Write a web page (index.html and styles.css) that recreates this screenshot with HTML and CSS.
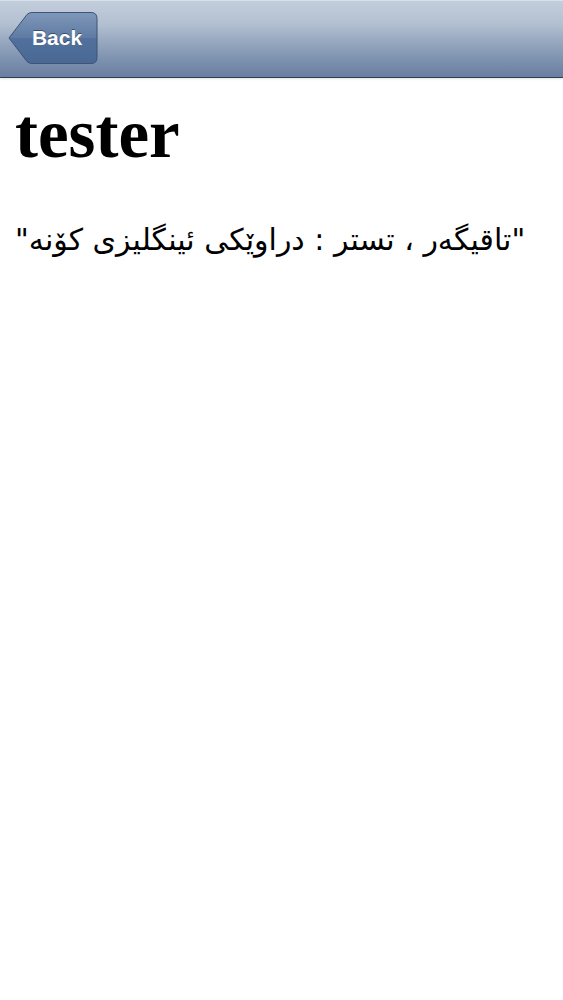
FILE: index.html
```html
<!DOCTYPE html>
<html>
<head>
<meta charset="utf-8">
<link rel="stylesheet" href="styles.css">
</head>
<body>
<header class="navbar">
  <a class="back" href="#">
    <svg class="back-shape" viewBox="0 0 90 52" preserveAspectRatio="none">
      <defs>
        <linearGradient id="bg" x1="0" y1="0" x2="0" y2="1">
          <stop offset="0" stop-color="#7f97b9"/>
          <stop offset="0.5" stop-color="#5f7ba3"/>
          <stop offset="0.51" stop-color="#51709b"/>
          <stop offset="1" stop-color="#4a6894"/>
        </linearGradient>
      </defs>
      <path d="M1 26 L19 2.5 Q21 0.5 24 0.5 L83 0.5 Q89 0.5 89 6.5 L89 45.5 Q89 51.5 83 51.5 L24 51.5 Q21 51.5 19 49.5 Z" fill="url(#bg)" stroke="#3c5276" stroke-width="1"/>
    </svg>
    <span class="back-label">Back</span>
  </a>
</header>
<main class="content">
  <h1 class="title">tester</h1>
  <p class="desc">"تاقیگەر ، تستر : دراوێکی ئینگلیزی کۆنە"</p>
</main>
</body>
</html>
```
FILE: styles.css
```css
html, body {
  margin: 0;
  padding: 0;
  background: #ffffff;
}
.navbar {
  height: 78px;
  box-sizing: border-box;
  border-top: 1px solid #d9e0ea;
  border-bottom: 1px solid #2f3e57;
  background: linear-gradient(to bottom, #c3cedc 0%, #b3c0d1 30%, #95a6be 55%, #7a8fad 80%, #6a7fa0 100%);
  box-shadow: 0 1px 2px rgba(0,0,0,0.12);
  display: flex;
  align-items: center;
  padding-left: 8px;
}
.back {
  position: relative;
  width: 90px;
  height: 52px;
  display: flex;
  align-items: center;
  justify-content: center;
  text-decoration: none;
  margin-top: -2px;
}
.back-shape {
  position: absolute;
  left: 0;
  top: 0;
  width: 90px;
  height: 52px;
}
.back-label {
  position: relative;
  font-family: "Liberation Sans", Arial, sans-serif;
  font-weight: bold;
  font-size: 21px;
  color: #ffffff;
  text-shadow: 0 -1px 0 rgba(30,45,70,0.6);
  padding-left: 8px;
}
.content {
  padding: 0 15px;
}
.title {
  font-family: "Liberation Serif", "Times New Roman", serif;
  font-weight: bold;
  font-size: 69px;
  line-height: 80px;
  margin: 16px 0 0 0;
  color: #000;
}
.desc {
  font-family: "DejaVu Sans", sans-serif;
  font-size: 30px;
  line-height: 44px;
  margin: 44px 0 0 0;
  color: #000;
}
```
